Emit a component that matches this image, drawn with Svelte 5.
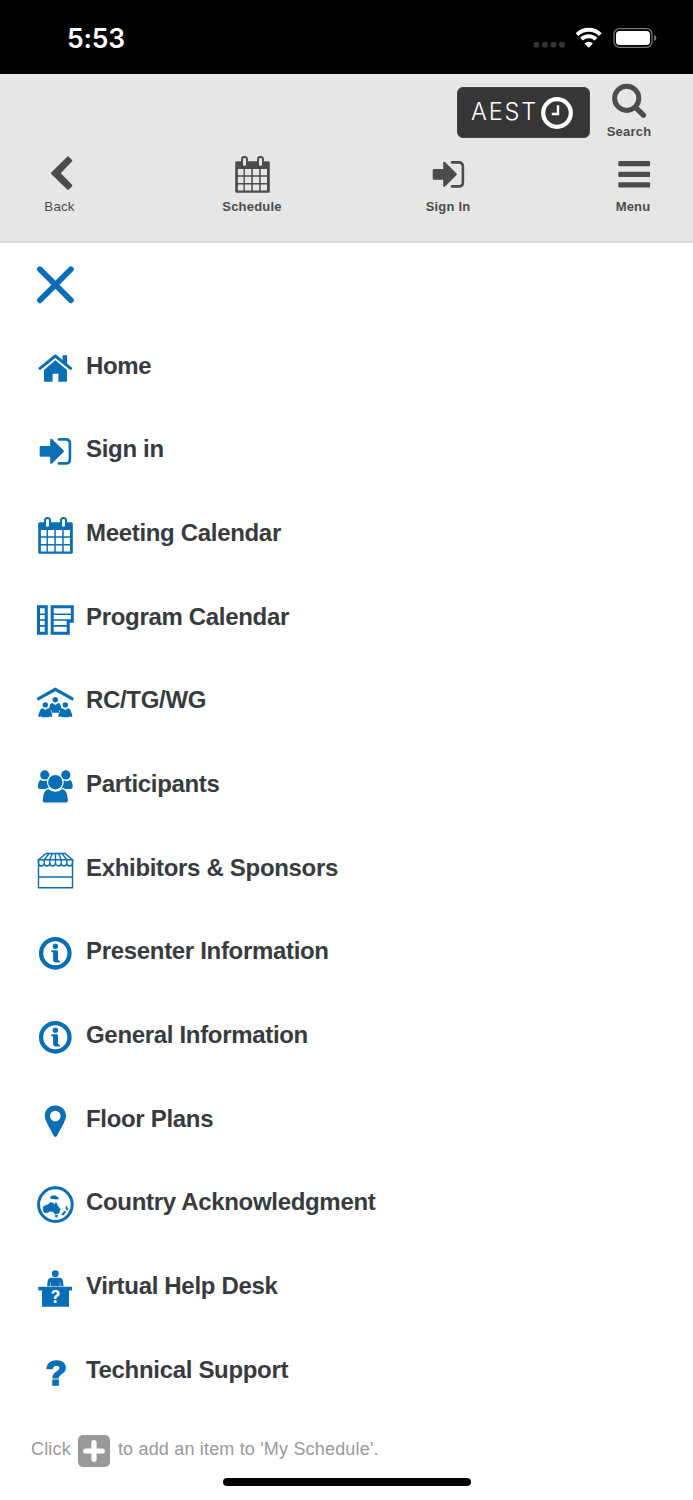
<script lang="ts">
    type MenuItem = { icon: string; label: string };

    const navItems: MenuItem[] = [
        { icon: 'back', label: 'Back' },
        { icon: 'calendar', label: 'Schedule' },
        { icon: 'signin', label: 'Sign In' },
        { icon: 'bars', label: 'Menu' },
    ];

    const menuItems: MenuItem[] = [
        { icon: 'home', label: 'Home' },
        { icon: 'signin', label: 'Sign in' },
        { icon: 'calendar', label: 'Meeting Calendar' },
        { icon: 'program', label: 'Program Calendar' },
        { icon: 'group', label: 'RC/TG/WG' },
        { icon: 'people', label: 'Participants' },
        { icon: 'booth', label: 'Exhibitors & Sponsors' },
        { icon: 'info', label: 'Presenter Information' },
        { icon: 'info', label: 'General Information' },
        { icon: 'pin', label: 'Floor Plans' },
        { icon: 'globe', label: 'Country Acknowledgment' },
        { icon: 'desk', label: 'Virtual Help Desk' },
        { icon: 'question', label: 'Technical Support' },
    ];
</script>

{#snippet icon(name: string)}
    <svg class="icon" viewBox="0 0 40 40" width="40" height="40" fill="currentColor" aria-hidden="true">
        {#if name === 'back'}
            <path d="M27.2 1.7Q28 1 28.8 1.8L32 5Q32.7 5.8 32 6.5L20.8 18.2L32 29.8Q32.7 30.6 32 31.4L28.8 34.4Q28 35.1 27.2 34.4L11.2 19Q10.5 18.2 11.2 17.4Z" />
        {:else if name === 'bars'}
            <rect x="5.3" y="6" width="31.8" height="5.3" rx="1" />
            <rect x="5.3" y="16.7" width="31.8" height="5.3" rx="1" />
            <rect x="5.3" y="27.3" width="31.8" height="5.3" rx="1" />
        {:else if name === 'home'}
            <path d="M27.6 6.2h4.5v10l-4.5-4z" />
            <path d="M5 19.4L20.3 7L35.6 19.4" fill="none" stroke="currentColor" stroke-width="2.9" stroke-linecap="round" stroke-linejoin="round" />
            <path d="M20.3 11.3L32 21V31.8Q32 32.7 31 32.7H23.4V24.8H17.6V32.7H10Q9 32.7 9 31.8V21Z" />
        {:else if name === 'signin'}
            <path d="M6 14H15.2V7.6Q15.4 6 17 7.1L28.6 18.6Q29.2 19.3 28.6 20L17 31.5Q15.4 32.6 15.2 31V24.7H6Q4.7 24.7 4.7 23.4V15.3Q4.7 14 6 14Z" />
            <path d="M24 7.4H30.7Q34.9 7.4 34.9 11.6V27.2Q34.9 31.4 30.7 31.4H24" fill="none" stroke="currentColor" stroke-width="2.6" stroke-linecap="round" />
        {:else if name === 'calendar'}
            <path fill-rule="evenodd" d="M4.7 6.2H36.3Q37.8 6.2 37.8 7.7V36.3Q37.8 37.8 36.3 37.8H4.7Q3.2 37.8 3.2 36.3V7.7Q3.2 6.2 4.7 6.2ZM5.9 14v6.3h5.6V14ZM12.9 14v6.3h6.4V14ZM20.8 14v6.3h6.4V14ZM28.7 14v6.3h6.3V14ZM5.9 21.7V28h5.6v-6.3ZM12.9 21.7V28h6.4v-6.3ZM20.8 21.7V28h6.4v-6.3ZM28.7 21.7V28h6.3v-6.3ZM5.9 29.4v6.2h5.6v-6.2ZM12.9 29.4v6.2h6.4v-6.2ZM20.8 29.4v6.2h6.4v-6.2ZM28.7 29.4v6.2h6.3v-6.2Z" />
            <rect class="ring" x="10" y="2" width="5" height="9.8" rx="2.4" />
            <rect class="ring" x="26" y="2" width="5" height="9.8" rx="2.4" />
        {:else if name === 'program'}
            <path fill-rule="evenodd" d="M2 5.3H12.8V34.8H2ZM5 8.3v5.1h4.7V8.3ZM5 15v4.2h4.7V15ZM5 20.8v4.3h4.7v-4.3ZM5 26.7v5h4.7v-5Z" />
            <path fill-rule="evenodd" d="M15.7 5.3H38.8V22.7H34.8V34.8H15.7ZM18.7 8.3v5.1h17.1V8.3ZM18.7 15v4.2h17.1V15ZM18.7 20.8v4.3h13v-4.3ZM18.7 26.7v5h13v-5Z" />
        {:else if name === 'group'}
            <path d="M3.6 15.7L20.3 6.4L37 15.7" fill="none" stroke="currentColor" stroke-width="3.2" stroke-linecap="round" />
            <circle cx="20.3" cy="16.7" r="2.7" />
            <circle cx="10.3" cy="21.9" r="2.7" />
            <circle cx="30.3" cy="21.9" r="2.7" />
            <path d="M17.3 20L20.3 22L23.3 20Q25 20.2 25.6 22L26.8 26.4Q25.8 28 24 27.2V29.7H16.6V27.2Q14.8 28 13.8 26.4L15 22Q15.6 20.2 17.3 20Z" />
            <path d="M7.5 25.2L10.3 27L13 25.2Q14.8 25.3 15.5 27.5L17.4 32.5Q17 34.8 15 33.6L14.4 32.6V34.2H6.2V32.6L5.5 33.6Q3.6 34.8 3.2 32.5L5 27.5Q5.7 25.3 7.5 25.2Z" />
            <path d="M27.5 25.2L30.3 27L33 25.2Q34.8 25.3 35.5 27.5L37.4 32.5Q37 34.8 35 33.6L34.4 32.6V34.2H26.2V32.6L25.5 33.6Q23.6 34.8 23.2 32.5L25 27.5Q25.7 25.3 27.5 25.2Z" />
        {:else if name === 'people'}
            <circle cx="9.8" cy="7.9" r="4.6" />
            <circle cx="30.8" cy="7.9" r="4.6" />
            <path d="M5.4 13Q9.3 15.3 12.4 13Q12 18 15 22H5Q2.9 22 2.9 19.3Q3.2 14.2 5.4 13Z" />
            <path d="M35.2 13Q31.3 15.3 28.2 13Q28.6 18 25.6 22H35.6Q37.7 22 37.7 19.3Q37.4 14.2 35.2 13Z" />
            <circle class="cutout" cx="20.3" cy="15.2" r="7.8" />
            <path class="cutout" d="M13.2 21.4Q20.3 27 27.4 21.4Q31.8 22.8 32.7 28L33.5 33Q33.6 36.2 30.3 36.2H10.3Q7 36.2 7.1 33L7.9 28Q8.8 22.8 13.2 21.4Z" />
        {:else if name === 'booth'}
            <g fill="none" stroke="currentColor" stroke-width="1.4">
                <path d="M3.5 8.8V36.8H37.5V8.8M3.5 26H37.5" />
                <path d="M3.5 8.8L11 2.5H30L37.5 8.8Z" />
                <path d="M14 2.5L9.2 8.8V12M17.2 2.5L14.8 8.8V12M20.5 2.5V12M23.8 2.5L26.2 8.8V12M27 2.5L31.8 8.8V12" />
                <path d="M3.5 8.8V12A2.85 3 0 0 0 9.2 12A2.8 3 0 0 0 14.8 12A2.85 3 0 0 0 20.5 12A2.85 3 0 0 0 26.2 12A2.8 3 0 0 0 31.8 12A2.85 3 0 0 0 37.5 12" />
            </g>
        {:else if name === 'info'}
            <circle cx="20.3" cy="19.3" r="14.2" fill="none" stroke="currentColor" stroke-width="4.3" />
            <circle cx="20.4" cy="12.3" r="2.7" />
            <path d="M17 16.2H21.8Q23 16.2 23 17.4V25Q23 26.6 24.4 26.8Q25.2 27 25 28.6H20.8Q18.1 28.2 18.1 25.4V18.8Q17.9 18.2 16.6 18.1Q15.6 16.6 17 16.2Z" />
        {:else if name === 'pin'}
            <path fill-rule="evenodd" d="M20.4 3.5C14.3 3.5 9.8 8.1 9.8 14C9.8 18.4 14.4 25 18.4 33.3Q20.4 36.8 22.4 33.3C26.4 25 31 18.4 31 14C31 8.1 26.5 3.5 20.4 3.5ZM20.3 8.8A5.3 5.3 0 1 1 20.3 19.4A5.3 5.3 0 1 1 20.3 8.8Z" />
        {:else if name === 'globe'}
            <circle cx="20.4" cy="19.6" r="16.8" fill="none" stroke="currentColor" stroke-width="3" />
            <path d="M8 22L11 20.2L13 20L15 17.5L18.3 18L19.2 20.2L21 17.3L22.4 20.4L25.3 24.4L23.8 28.3L20.5 29.2L18.3 27L15.5 26L12 27.8L8.8 27.3Z" stroke="currentColor" stroke-width="0.6" stroke-linejoin="round" />
            <path d="M15.2 12L17 10.4L20.5 10.6L24 13.1L23 14.4L19.8 14.3L17.8 13.9L15.8 14.1Z" />
            <path d="M19.8 30.3L23.2 30.1L22 32.4L20.2 31.9Z" />
            <path d="M30.5 21.5L31.5 20.8L33.3 24.2L31.5 25.6L30.8 24Z" />
            <path d="M26.2 29.6L29.7 25.8L31.2 26.8L28.3 30.6Z" />
        {:else if name === 'desk'}
            <circle cx="20.3" cy="4.7" r="3.4" />
            <path d="M16.2 8.7H24.4Q27.6 9 28 12.3L28.5 17.2H25.3V13.5H24.8V17.2H15.8V13.5H15.3V17.2H12.1L12.6 12.3Q13 9 16.2 8.7Z" />
            <path d="M3.3 17.7H37V21.4H34V37.7H7V21.4H3.3Z" />
            <text class="mark" x="20.5" y="34.3" text-anchor="middle">?</text>
        {:else if name === 'question'}
            <text class="mark big" x="21.2" y="32.3" text-anchor="middle">?</text>
        {/if}
    </svg>
{/snippet}

<div class="screen">
    <div class="status">
        <span class="time">5:53</span>
        <svg class="signals" width="126" height="24" viewBox="0 0 126 24" aria-hidden="true">
            <g fill="#353535">
                <rect x="3.7" y="15.9" width="5.7" height="5.7" rx="1.8" />
                <rect x="12.1" y="15.9" width="5.7" height="5.7" rx="1.8" />
                <rect x="20.6" y="15.9" width="5.7" height="5.7" rx="1.8" />
                <rect x="29.1" y="15.9" width="5.7" height="5.7" rx="1.8" />
            </g>
            <g fill="none" stroke="#fff" stroke-width="4">
                <path d="M47.1 8.6A16.6 16.6 0 0 1 70.3 8.6" />
                <path d="M51.4 13.2A10.4 10.4 0 0 1 66 13.2" />
            </g>
            <path d="M54.5 17.5A6 6 0 0 1 62.9 17.5L58.7 21.7Z" fill="#fff" />
            <rect x="84" y="2.6" width="38" height="18.8" rx="5.6" fill="none" stroke="#777" stroke-width="1.3" />
            <rect x="86" y="4.9" width="34" height="14.2" rx="3.6" fill="#fff" />
            <path d="M124 9Q126.5 10 126.5 12Q126.5 14 124 15Z" fill="#777" />
        </svg>
    </div>

    <header class="header">
        <div class="tools">
            <button class="zone">
                <span>AEST</span>
                <svg width="32" height="32" viewBox="0 0 32 32" fill="none" stroke="#fff" aria-hidden="true">
                    <circle cx="16" cy="16" r="13.8" stroke-width="4.2" />
                    <path d="M17 8.3V17H10.8" stroke-width="2.4" />
                </svg>
            </button>
            <div class="search">
                <svg width="36" height="36" viewBox="0 0 36 36" fill="none" stroke="currentColor" aria-hidden="true">
                    <circle cx="15.7" cy="15.3" r="12.1" stroke-width="5" />
                    <path d="M25 24.8L32.4 32.2" stroke-width="5.4" stroke-linecap="round" />
                </svg>
                <span class="caption">Search</span>
            </div>
        </div>
        <nav class="nav">
            {#each navItems as item}
                <div class="nav-item" class:plain={item.icon === 'back'}>
                    {@render icon(item.icon)}
                    <span class="caption">{item.label}</span>
                </div>
            {/each}
        </nav>
    </header>

    <main class="panel">
        <svg class="close" width="40" height="40" viewBox="0 0 40 40" aria-hidden="true">
            <path d="M4.9 4.3L35.9 35.3M35.9 4.3L4.9 35.3" stroke="currentColor" stroke-width="5.8" stroke-linecap="round" />
        </svg>
        <ul class="menu">
            {#each menuItems as item}
                <li>
                    {@render icon(item.icon)}
                    <span>{item.label}</span>
                </li>
            {/each}
        </ul>
        <p class="hint">
            <span>Click</span>
            <svg width="32" height="32" viewBox="0 0 32 32" aria-hidden="true">
                <rect width="32" height="32" rx="5" fill="#999" />
                <path d="M16 7.7V24.3M7.7 16H24.3" stroke="#fff" stroke-width="5.2" stroke-linecap="round" />
            </svg>
            <span>to add an item to 'My Schedule'.</span>
        </p>
        <div class="home-bar"></div>
    </main>
</div>

<style>
    :global(body) {
        background: #fff;
    }

    .screen {
        display: flex;
        flex-direction: column;
        width: 693px;
        height: 1500px;
        overflow: hidden;
        font-family: 'Liberation Sans', Arial, sans-serif;
        background: #fff;
    }

    .screen * {
        box-sizing: border-box;
    }

    .icon {
        display: block;
        flex: none;
        overflow: visible;
    }

    .status {
        display: flex;
        justify-content: space-between;
        align-items: center;
        height: 74px;
        padding: 2px 36px 0 67px;
        background: #000;
    }

    .time {
        color: #fff;
        font: 600 26.5px/30px Inter, sans-serif;
        letter-spacing: -0.2px;
    }

    .signals {
        overflow: visible;
        margin-right: 1px;
    }

    .header {
        height: 169px;
        background: #e6e6e6;
        border-bottom: 2px solid #dadcde;
        color: #4c4c4c;
    }

    .tools {
        display: flex;
        justify-content: flex-end;
        height: 81px;
        padding: 9px 34px 0 0;
    }

    .zone {
        display: flex;
        align-items: center;
        width: 133px;
        height: 51px;
        margin: 4px 9px 0 0;
        padding: 0 0 0 13px;
        border: 1px solid #444;
        border-radius: 6px;
        background: #363636;
        color: #fff;
        font: 300 23.5px/28px Inter, sans-serif;
        letter-spacing: 1.9px;
    }

    .zone span {
        width: 70px;
        margin-top: -2px;
        text-align: left;
    }

    .search {
        display: flex;
        flex-direction: column;
        align-items: center;
        width: 60px;
    }

    .search .caption {
        margin-top: 5px;
    }

    .caption {
        font-size: 13px;
        font-weight: bold;
        line-height: 16px;
        letter-spacing: 0.2px;
    }

    .nav {
        display: grid;
        grid-template-columns: 192.5px 196px 185px 80px;
        padding-left: 19.5px;
    }

    .nav-item {
        display: flex;
        flex-direction: column;
        align-items: center;
        width: 80px;
    }

    .nav-item .caption {
        margin-top: 4px;
    }

    .plain .caption {
        font-weight: normal;
        font-size: 13.3px;
    }

    .panel {
        flex: 1;
        display: flex;
        flex-direction: column;
        color: #086eb6;
    }

    .close {
        margin: 22px 0 0 35px;
    }

    .menu {
        margin: 18.9px 0 0;
        padding: 0 0 0 35px;
        list-style: none;
    }

    .menu li {
        display: flex;
        align-items: center;
        gap: 11px;
        height: 83.67px;
    }

    .menu .icon {
        margin-top: 6px;
    }

    .menu span {
        color: #383b3e;
        font-size: 24px;
        font-weight: bold;
        line-height: 28px;
        letter-spacing: -0.32px;
    }

    .ring {
        fill: #fff;
        stroke: currentColor;
        stroke-width: 2;
    }

    .nav .ring {
        fill: #e6e6e6;
    }

    .cutout {
        stroke: #fff;
        stroke-width: 1.2;
    }

    .mark {
        fill: #fff;
        font: bold 17px Inter, sans-serif;
    }

    .mark.big {
        fill: currentColor;
        stroke: currentColor;
        stroke-width: 1.6;
        font: bold 35px 'Liberation Sans', sans-serif;
    }

    .hint {
        display: flex;
        align-items: center;
        margin: 23.3px 0 0 31px;
        color: #999;
        font-size: 18px;
        line-height: 24px;
        letter-spacing: 0.18px;
    }

    .hint svg {
        margin: 0 8px 0 7px;
    }

    .hint span {
        margin-top: -3px;
    }

    .home-bar {
        flex: none;
        width: 248px;
        height: 8px;
        margin: 11px auto 0;
        border-radius: 4px;
        background: #000;
    }
</style>
